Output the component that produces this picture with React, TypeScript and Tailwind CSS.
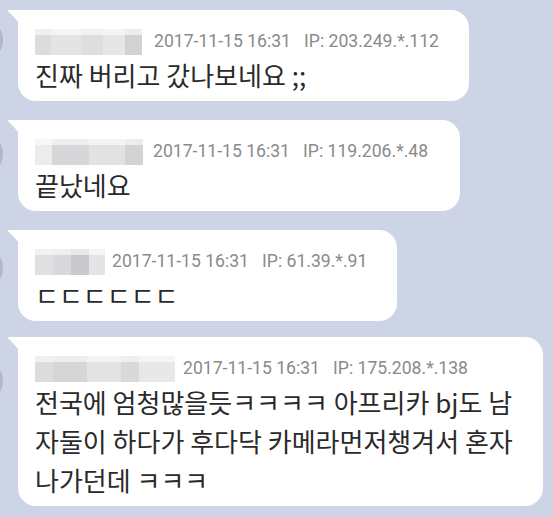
const messages = [
  {
    id: 1,
    width: "w-[451px]",
    gap: "mt-0",
    avatar: "top-[8px]",
    blurGap: "ml-[12px]",
    blur: [
      { w: 16, c: "#dcdcdf" },
      { w: 30, c: "#e4e4e6" },
      { w: 22, c: "#dedee1" },
      { w: 22, c: "#e6e6e8" },
      { w: 17, c: "#d2d2d5" },
    ],
    time: "2017-11-15 16:31",
    ip: "IP: 203.249.*.112",
    lines: ["진짜 버리고 갔나보네요 ;;"],
  },
  {
    id: 2,
    width: "w-[442px]",
    gap: "mt-[19px]",
    avatar: "top-[12px]",
    blurGap: "ml-[10px]",
    blur: [
      { w: 17, c: "#ececee" },
      { w: 37, c: "#d7d7da" },
      { w: 36, c: "#e2e2e4" },
      { w: 18, c: "#d3d3d6" },
    ],
    time: "2017-11-15 16:31",
    ip: "IP: 119.206.*.48",
    lines: ["끝났네요"],
  },
  {
    id: 3,
    width: "w-[379px]",
    gap: "mt-[19px]",
    avatar: "top-[16px]",
    blurGap: "ml-[7px]",
    blur: [
      { w: 18, c: "#e0e0e3" },
      { w: 18, c: "#d9d9dc" },
      { w: 18, c: "#c9c9cc" },
      { w: 16, c: "#e4e4e6" },
    ],
    time: "2017-11-15 16:31",
    ip: "IP: 61.39.*.91",
    lines: ["ㄷㄷㄷㄷㄷㄷ"],
  },
  {
    id: 4,
    width: "w-[525px]",
    gap: "mt-[16px]",
    avatar: "top-[22px]",
    blurGap: "ml-[8px]",
    blur: [
      { w: 18, c: "#dcdcdf" },
      { w: 34, c: "#d6d6d9" },
      { w: 34, c: "#e3e3e5" },
      { w: 18, c: "#d9d9dc" },
      { w: 36, c: "#e8e8ea" },
    ],
    time: "2017-11-15 16:31",
    ip: "IP: 175.208.*.138",
    lines: [
      "전국에 엄청많을듯ㅋㅋㅋㅋ 아프리카 bj도 남",
      "자둘이 하다가 후다닥 카메라먼저챙겨서 혼자",
      "나가던데 ㅋㅋㅋ",
    ],
  },
];

// pixelated name, hidden like in the capture
const BlurredName = ({ blocks }: { blocks: { w: number; c: string }[] }) => (
  <div className="flex flex-col">
    <div className="flex h-[6px] opacity-40">
      {blocks.map((b, i) => (
        <div key={i} style={{ width: b.w, backgroundColor: b.c }} />
      ))}
    </div>
    <div className="flex h-[20px]">
      {blocks.map((b, i) => (
        <div key={i} style={{ width: b.w, backgroundColor: b.c }} />
      ))}
    </div>
  </div>
);

export default function App() {
  return (
    <div className="w-[553px] h-[517px] overflow-hidden bg-[#cdd4e6] pt-[10px]">
      {messages.map((m) => (
        <div key={m.id} className={`relative ${m.gap}`}>
          {/* avatar peeking at the edge */}
          <div
            className={`absolute left-[-41px] ${m.avatar} h-[44px] w-[44px] rounded-full bg-[#b3b8c6]`}
          />
          <div
            className={`relative ml-[18px] ${m.width} rounded-[18px] rounded-tl-none bg-white pl-[17px] pt-[18px] pb-[7px]`}
          >
            <svg
              className="absolute left-[-11px] top-0"
              width="12"
              height="13"
              viewBox="0 0 12 13"
            >
              <path d="M12 0 H2 Q0 0 1.3 1.5 Q7 6.5 12 13 Z" fill="#ffffff" />
            </svg>
            <div className="flex h-[27px] items-center">
              <BlurredName blocks={m.blur} />
              <div
                className={`${m.blurGap} flex font-['Roboto',sans-serif] text-[17.6px] text-[#8a8a8a]`}
              >
                <span>{m.time}</span>
                <span className="ml-[13px]">{m.ip}</span>
              </div>
            </div>
            <div className="font-['Noto_Sans_CJK_KR',sans-serif] text-[26px] leading-[39px] text-[#2a2a2a]">
              {m.lines.map((line, i) => (
                <div key={i} className="whitespace-pre">
                  {line}
                </div>
              ))}
            </div>
          </div>
        </div>
      ))}
    </div>
  );
}
